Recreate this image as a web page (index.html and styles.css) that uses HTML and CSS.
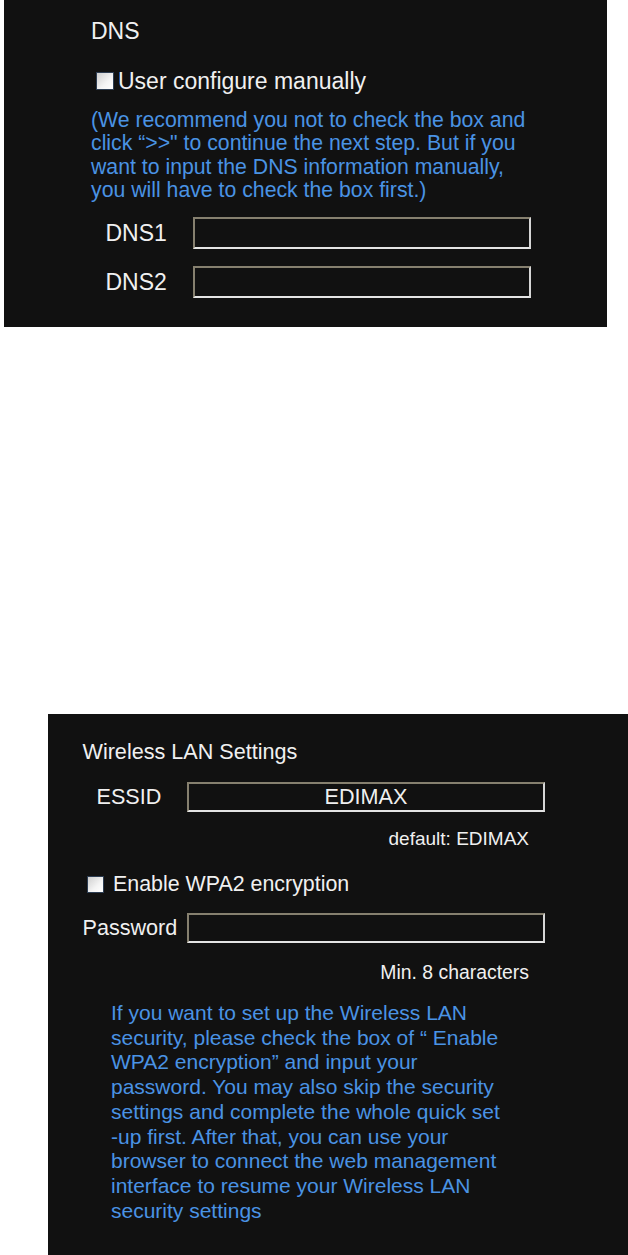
FILE: index.html
```html
<!DOCTYPE html>
<html lang="en">
<head>
  <meta charset="UTF-8">
  <title>Quick Setup</title>
  <meta name="viewport" content="width=device-width, initial-scale=1.0">
  <link rel="stylesheet" href="styles.css">
</head>
<body>

  <div class="panel dns-panel">
    <div class="title">DNS</div>
    <label class="check-row">
      <input type="checkbox" class="check">User configure manually
    </label>
    <p class="note">(We recommend you not to check the box and click “&gt;&gt;" to continue the next step. But if you want to input the DNS information manually, you will have to check the box first.)</p>
    <div class="field-row">
      <span class="field-label">DNS1</span>
      <input type="text" class="field">
    </div>
    <div class="field-row second">
      <span class="field-label">DNS2</span>
      <input type="text" class="field">
    </div>
  </div>

  <div class="panel wlan-panel">
    <div class="title">Wireless LAN Settings</div>
    <div class="field-row">
      <span class="field-label essid-label">ESSID</span>
      <input type="text" class="field essid" value="EDIMAX">
    </div>
    <div class="hint">default: EDIMAX</div>
    <label class="check-row">
      <input type="checkbox" class="check">Enable WPA2 encryption
    </label>
    <div class="field-row pass-row">
      <span class="field-label pass-label">Password</span>
      <input type="password" class="field">
    </div>
    <div class="hint min-hint">Min. 8 characters</div>
    <p class="note">If you want to set up the Wireless LAN security, please check the box of “ Enable WPA2 encryption” and input your password. You may also skip the security settings and complete the whole quick set -up first. After that, you can use your browser to connect the web management interface to resume your Wireless LAN security settings</p>
  </div>

</body>
</html>
```

FILE: styles.css
```css
body {
  margin: 0;
  background-color: #fff;
  font-family: "Liberation Sans", Arial, sans-serif;
}

.panel {
  background-color: #111;
  color: #f0f0f0;
  box-sizing: border-box;
}

.title {
  line-height: 26px;
}

.check-row {
  display: flex;
  align-items: center;
  line-height: 26px;
}

.check {
  appearance: none;
  -webkit-appearance: none;
  box-sizing: border-box;
  margin: 0;
  border: 1px solid #2d3d52;
  background: linear-gradient(135deg, #cfcfcf, #f4f4f4 60%, #fff);
}

.note {
  margin: 0;
  color: #4a93e4;
}

.field-row {
  display: flex;
  align-items: center;
}

.field {
  box-sizing: border-box;
  margin: 0;
  padding: 0 6px;
  border: 2px solid;
  border-color: #86806f #d6d6d6 #e4e4e4 #86806f;
  background-color: #111;
  color: #f0f0f0;
  font-family: inherit;
  font-size: inherit;
  outline: none;
}

/* DNS */
.dns-panel {
  margin-left: 4px;
  width: 603px;
  height: 327px;
  padding: 18px 0 0 87px;
  font-size: 23px;
}

.dns-panel .check-row {
  margin-top: 24px;
}

.dns-panel .check {
  width: 18px;
  height: 18px;
  margin: 0 4px 0 5px;
}

.dns-panel .note {
  margin-top: 15px;
  width: 443px;
  font-size: 21.25px;
  line-height: 23.3px;
}

.dns-panel .field-row {
  margin-top: 15px;
  padding-left: 14.5px;
}

.dns-panel .field-row.second {
  margin-top: 17px;
}

.dns-panel .field-label {
  width: 87.5px;
  line-height: 32px;
}

.dns-panel .field {
  width: 338px;
  height: 32px;
}

/* Wireless LAN */
.wlan-panel {
  margin: 387px 0 0 48px;
  height: 541px;
  padding: 25px 0 0 34.5px;
  font-size: 21.6px;
}

.wlan-panel .field-row {
  margin-top: 17px;
}

.wlan-panel .field-label {
  line-height: 30px;
}

.essid-label {
  width: 90.5px;
  padding-left: 14px;
}

.pass-label {
  width: 104.5px;
}

.wlan-panel .field {
  width: 358px;
  height: 30px;
}

.essid {
  text-align: center;
}

.hint {
  width: 446.5px;
  margin-top: 15px;
  text-align: right;
  font-size: 19px;
  line-height: 24px;
}

.wlan-panel .check-row {
  margin-top: 20px;
  font-size: 21.4px;
}

.wlan-panel .check {
  width: 17px;
  height: 17px;
  margin: 0 9px 0 4.5px;
}

.wlan-panel .pass-row {
  margin-top: 16px;
}

.min-hint {
  margin-top: 17px;
  font-size: 19.4px;
}

.wlan-panel .note {
  width: 400px;
  margin-top: 17px;
  padding-left: 28.5px;
  font-size: 21px;
  line-height: 24.7px;
}
```
